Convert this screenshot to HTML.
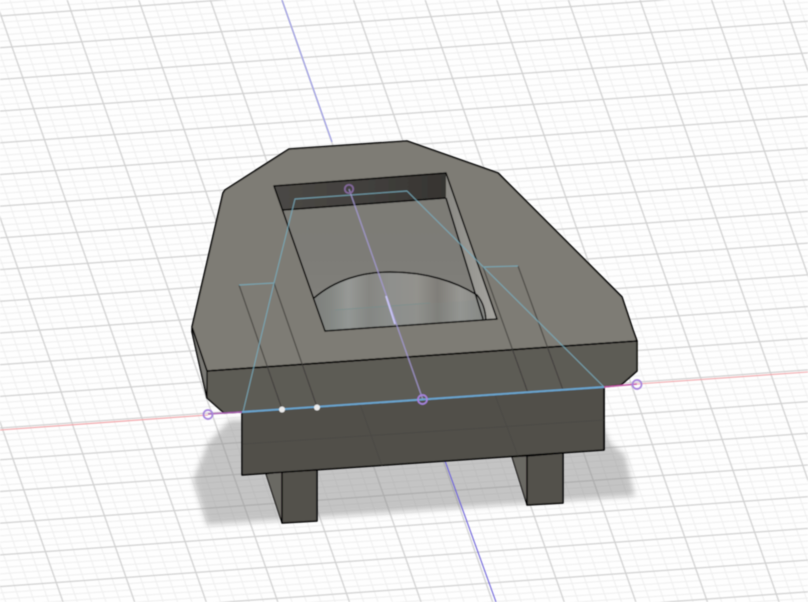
<!DOCTYPE html>
<html>
<head>
<meta charset="utf-8">
<style>
html,body{margin:0;padding:0;background:#fdfdfd;}
svg{display:block;width:808px;height:602px;overflow:hidden;}
</style>
</head>
<body>
<svg xmlns="http://www.w3.org/2000/svg" width="808" height="602" viewBox="0 0 808 602">
<defs>
<pattern id="grid" patternUnits="userSpaceOnUse" width="100" height="100" patternTransform="matrix(0.6984 -0.0503 0.1082 0.3092 280.5 -4.2)">
<g fill="#eeeeee">
<rect x="19.3" y="0" width="1.4" height="100"/><rect x="39.3" y="0" width="1.4" height="100"/><rect x="59.3" y="0" width="1.4" height="100"/><rect x="79.3" y="0" width="1.4" height="100"/>
<rect x="0" y="18.4" width="100" height="3.2"/><rect x="0" y="38.4" width="100" height="3.2"/><rect x="0" y="58.4" width="100" height="3.2"/><rect x="0" y="78.4" width="100" height="3.2"/>
</g>
<g fill="#cecece">
<rect x="0" y="0" width="0.9" height="100"/><rect x="99.1" y="0" width="0.9" height="100"/>
<rect x="0" y="0" width="100" height="1.9"/><rect x="0" y="98.1" width="100" height="1.9"/>
</g>
</pattern>
<filter id="b8" x="-10%" y="-10%" width="120%" height="120%"><feGaussianBlur stdDeviation="3"/></filter>
<filter id="b1" x="-5%" y="-5%" width="110%" height="110%"><feGaussianBlur stdDeviation="0.4"/></filter>
<linearGradient id="wall" x1="0" y1="0" x2="1" y2="0">
<stop offset="0" stop-color="#4a4845"/><stop offset="0.5" stop-color="#43413e"/><stop offset="1" stop-color="#363431"/>
</linearGradient>
<linearGradient id="floor" x1="0" y1="0" x2="0" y2="1">
<stop offset="0" stop-color="#7d7c76"/><stop offset="0.5" stop-color="#7d7c77"/><stop offset="1" stop-color="#83827d"/>
</linearGradient>
<linearGradient id="cyl" x1="0" y1="0" x2="1" y2="0">
<stop offset="0" stop-color="#7d7f7c"/><stop offset="0.1" stop-color="#858884"/><stop offset="0.2" stop-color="#979996"/><stop offset="0.32" stop-color="#868682"/><stop offset="0.45" stop-color="#8f908d"/><stop offset="0.6" stop-color="#93928d"/><stop offset="0.72" stop-color="#807e79"/><stop offset="0.85" stop-color="#979793"/><stop offset="1" stop-color="#868682"/>
</linearGradient>
<linearGradient id="sideW" x1="0" y1="0" x2="1" y2="0">
<stop offset="0" stop-color="#8a8984"/><stop offset="1" stop-color="#a7a6a1"/>
</linearGradient>
</defs>

<rect width="808" height="602" fill="#fefefe"/>
<g filter="url(#b1)"><rect width="808" height="602" fill="url(#grid)"/></g>

<!-- ground shadow -->
<polygon points="208,443 230,420 600,420 610,443 625,455 635,496 207,525 193,480" fill="#8c8c8c" opacity="0.5" filter="url(#b8)"/>

<!-- axes -->
<g fill="none" filter="url(#b1)">
<line x1="0" y1="430" x2="208" y2="415" stroke="#f2a0a4" stroke-width="1.1"/>
<line x1="637" y1="384" x2="808" y2="372" stroke="#f2a8ac" stroke-width="1.1"/>
<line x1="282" y1="0" x2="332" y2="142" stroke="#9c9cec" stroke-width="1.1"/>
<line x1="423" y1="400" x2="496" y2="602" stroke="#6a60d8" stroke-width="1.1"/>
</g>

<g filter="url(#b1)">
<!-- legs -->
<polygon points="266,474 282,472 282,523" fill="#6b6964" stroke="#000" stroke-width="1.1"/>
<polygon points="282,472 317,470 317,521 282,523" fill="#53514c" stroke="#000" stroke-width="1.5" stroke-linejoin="round"/>
<polygon points="512,457 527,456 527,505" fill="#6b6964" stroke="#000" stroke-width="1.1"/>
<polygon points="527,456 563,453 563,503 527,505" fill="#53514c" stroke="#000" stroke-width="1.5" stroke-linejoin="round"/>

<!-- lower box -->
<polygon points="242,412 604,387 604,450 242,475" fill="#514f4a" stroke="#000" stroke-width="1.5" stroke-linejoin="round"/>

<!-- upper front -->
<polygon points="207,371 637,341 637,371 621,385 604,387 242,412 224,413 207,398" fill="#5d5b55"/>
<polygon points="192,328 207,370 207,398 192,332" fill="#7a7974"/>
<polyline points="192,328 192,332 207,398 224,413 242,412" fill="none" stroke="#000" stroke-width="1.5" stroke-linejoin="round"/>
<polyline points="604,387 621,385 637,371 637,341" fill="none" stroke="#000" stroke-width="1.5" stroke-linejoin="round"/>
<line x1="207" y1="371" x2="207" y2="398" stroke="#000" stroke-width="1.3"/>

<!-- top face -->
<polygon points="192,327 223,193 225,190 289,149 407,141 498,173 622,297 633,330 637,341 207,371" fill="#7e7c75" stroke="#000" stroke-width="1.6" stroke-linejoin="round"/>

<!-- pocket -->
<polygon points="274,186 446,173 497,319 325,331" fill="url(#floor)"/>
<polygon points="274,186 446,173 446,198 283,210" fill="url(#wall)"/>
<polygon points="446,173 497,319 483,319 446,198" fill="url(#sideW)"/>
<path d="M314,298 C335,280 362,272 390,272 C425,272 455,281 477,295 C482,301 485,308 486,320 L325,331 Z" fill="url(#cyl)"/>
<path d="M335,310 L430,303" stroke="#73908f" stroke-width="0.8" fill="none" opacity="0.7"/>
<path d="M330,310 L480,300 L486,320 L330,330 Z" fill="#7e9090" opacity="0.15"/>
<g fill="none" stroke="#000" stroke-width="1.5" stroke-linejoin="round">
<polygon points="274,186 446,173 497,319 325,331"/>
<line x1="283" y1="210" x2="446" y2="198"/>
<line x1="446" y1="198" x2="483" y2="319"/>
<path d="M314,298 C335,280 362,272 390,272 C425,272 455,281 477,295 C482,301 485,308 486,320"/>
</g>

<!-- front top edge -->
<line x1="207" y1="371" x2="637" y2="341" stroke="#000" stroke-width="1.5"/>
<line x1="604" y1="387" x2="604" y2="450" stroke="#000" stroke-width="1.5"/>

<!-- projected sketch dark lines -->
<g fill="none" stroke="#3d3c38" stroke-width="1.2" opacity="0.75">
<line x1="239" y1="285" x2="282" y2="409"/>
<line x1="274" y1="283" x2="317" y2="407"/>
<line x1="483" y1="267" x2="528" y2="393"/>
<line x1="518" y1="266" x2="563" y2="390"/>
</g>

<!-- faint grid on lower box -->
<g fill="none" stroke="#47453f" stroke-width="0.8" opacity="0.6">
<line x1="243" y1="444" x2="604" y2="420"/>
<line x1="360" y1="404" x2="382" y2="466"/>
<line x1="495" y1="395" x2="518" y2="456"/>
</g>

<!-- sketch light-blue lines -->
<g fill="none" stroke="#79aebf" stroke-width="1.15" stroke-linejoin="round" opacity="0.8">
<polyline points="243,412 274,283 295,199 407,191 604,387"/>
<polyline points="239,285 274,283"/>
<polyline points="483,267 518,266"/>
</g>

<!-- centre sketch line -->
<line x1="349" y1="189" x2="423" y2="400" stroke="#a79cd8" stroke-width="1.4" opacity="0.75"/>
<line x1="386" y1="296" x2="395" y2="324" stroke="#c8c4f4" stroke-width="1.8"/>

<!-- base line -->
<line x1="242" y1="412" x2="604" y2="387" stroke="#6ba6d0" stroke-width="1.9"/>
<line x1="208" y1="414" x2="242" y2="412" stroke="#a860b0" stroke-width="1.6"/>
<line x1="604" y1="387" x2="637" y2="384" stroke="#c65fa8" stroke-width="1.6"/>

<!-- points -->
<g fill="none" stroke="#a583dc" stroke-width="1.7">
<circle cx="208" cy="414.5" r="4.5"/>
<circle cx="422.5" cy="399.5" r="4.5"/>
<circle cx="637" cy="384.5" r="4.5"/>
<circle cx="349" cy="189" r="4.2" stroke="#84699c"/>
</g>
<circle cx="282" cy="409.5" r="3" fill="#ececec"/>
<circle cx="317" cy="407.5" r="3" fill="#ececec"/>
</g>
</svg>
</body>
</html>
